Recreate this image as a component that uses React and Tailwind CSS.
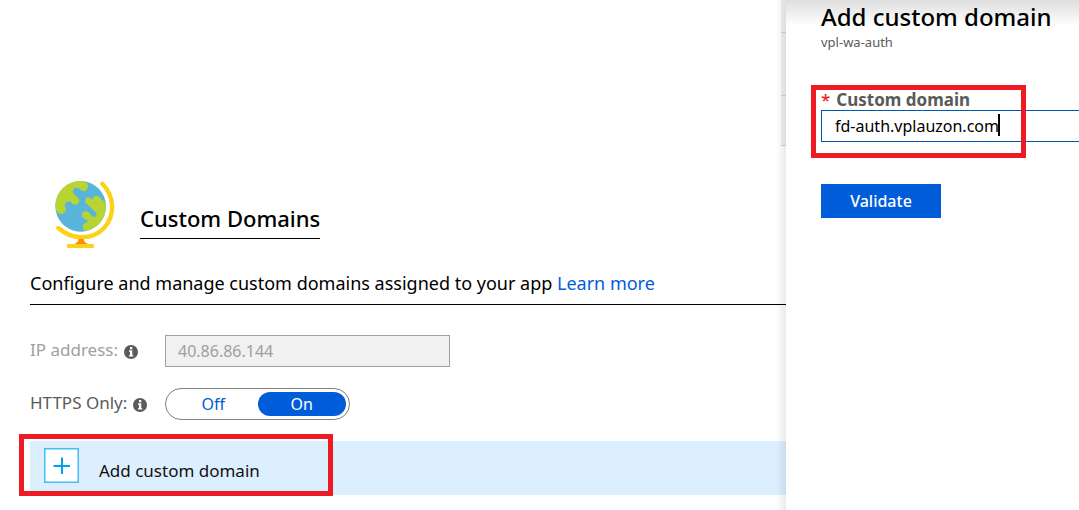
import React, { useState } from "react";

function Globe() {
  return (
    <svg width="60" height="67" viewBox="15 15 180 201" aria-hidden="true" className="shrink-0">
      <circle cx="92" cy="91" r="76" fill="#59b4d9" />
      <path
        d="M18 102C10 54 46 15 92 15L103 16C113 19 117 31 111 40C106 47 98 47 92 42C87 34 75 32 70 41C66 48 70 52 74 56L84 65C91 73 88 83 79 86C71 88 65 81 60 75C57 80 51 74 47 80L43 89C50 97 48 109 39 113C29 116 21 109 18 102Z"
        fill="#b8d432"
      />
      <path
        d="M129 67C131 60 140 57 147 62L166 80C172 110 157 142 132 155C123 160 114 163 105 164C97 159 96 150 101 144C106 140 113 141 113 136C113 132 105 129 100 125C95 121 94 112 100 108C107 103 115 106 119 112C124 120 130 125 136 122C142 118 140 112 137 109L108 81C103 76 105 68 110 65C118 61 122 70 127 71Z"
        fill="#b8d432"
      />
      <path d="M157 23C194 61 196 117 163 155C127 193 67 193 25 156" fill="none" stroke="#fcd116" strokeWidth="13" strokeLinecap="round" />
      <path d="M86 189H101C102 196 106 202 115 204H72C81 202 85 196 86 189Z" fill="#ff8c00" />
      <rect x="51" y="204" width="80" height="12" fill="#fcd116" />
    </svg>
  );
}

function InfoIcon() {
  return (
    <svg width="14" height="14" viewBox="0 0 14 14" aria-hidden="true" className="mt-1 shrink-0">
      <circle cx="7" cy="7" r="7" fill="#5a5a5a" />
      <path d="M6 2H8.3V4.3H6ZM5 5.3H8.3V10.2H9.3V11.6H5V10.2H6V6.7H5Z" fill="#fff" />
    </svg>
  );
}

function Highlight({ className }) {
  return <div aria-hidden="true" className={`pointer-events-none absolute border-5 border-[#ed1c24] ${className}`} />;
}

function CustomDomains() {
  const [httpsOnly, setHttpsOnly] = useState(true);
  const off = "h-6 flex-1 rounded-full text-base leading-6 text-[#015cda]";
  const on = "h-6 flex-1 rounded-full bg-[#015cda] text-base leading-6 text-white";
  return (
    <main className="min-w-0 flex-1 pt-[181px] pl-[30px]">
      <header className="flex items-start gap-[25px] pl-[25px]">
        <Globe />
        <h1 className="mt-[22px] border-b border-black pb-1 text-[22px] leading-[31px] font-medium">Custom Domains</h1>
      </header>
      <p className="border-b border-black pt-[20px] pb-[6px] text-lg leading-[30px] whitespace-nowrap">
        Configure and manage custom domains assigned to your app{" "}
        <a href="#learn-more" className="text-[#015cda]">Learn more</a>
      </p>
      <div className="mt-[30px] flex items-center">
        <div className="flex w-[135px] items-center gap-[6px] pb-[2px]">
          <label htmlFor="ip" className="text-[17px] leading-6 text-[#a0a0a0]">IP address:</label>
          <InfoIcon />
        </div>
        <input
          id="ip"
          disabled
          defaultValue="40.86.86.144"
          className="h-8 w-[285px] border border-[#a0a0a0] bg-[#f1f1f1] px-3 text-base text-[#a0a0a0]"
        />
      </div>
      <div className="mt-[21px] flex items-center">
        <div className="flex w-[135px] items-center gap-[6px] pb-[2px]">
          <span id="https-label" className="text-[17px] leading-6 text-[#5a5a5a]">HTTPS Only:</span>
          <InfoIcon />
        </div>
        <div role="group" aria-labelledby="https-label" className="flex h-8 w-[185px] items-center rounded-full border border-[#808080] px-[3px]">
          <button type="button" aria-pressed={!httpsOnly} onClick={() => setHttpsOnly(false)} className={httpsOnly ? off : on}>Off</button>
          <button type="button" aria-pressed={httpsOnly} onClick={() => setHttpsOnly(true)} className={httpsOnly ? on : off}>On</button>
        </div>
      </div>
      <div className="relative mt-[21px]">
        <button type="button" className="flex h-[54px] w-full items-start gap-5 bg-[#dceffe] pt-[7px] pl-[14px] text-left">
          <svg width="35" height="35" viewBox="0 0 35 35" aria-hidden="true" className="shrink-0">
            <rect x="0.75" y="0.75" width="33.5" height="33.5" fill="#fff" stroke="#45bdf3" strokeWidth="1.5" />
            <path d="M9.5 18H26M18 9.5V26" stroke="#00a2ed" strokeWidth="2" />
          </svg>
          <span className="mt-[11px] text-[17px] leading-6 text-[#111]">Add custom domain</span>
        </button>
        <Highlight className="top-[-7px] left-[-11px] h-[62px] w-[314px]" />
      </div>
    </main>
  );
}

function AddDomainPanel() {
  return (
    <aside className="relative w-[293px] shrink-0 bg-white bg-linear-to-b from-[#dedede] to-white to-[26px] pl-[35px]">
      <div aria-hidden="true" className="absolute top-0 right-full h-full w-[10px] bg-linear-to-l from-black/8 to-transparent" />
      <div aria-hidden="true" className="absolute top-0 right-full h-[146px] w-[5px] bg-black/5">
        <div className="absolute top-8 h-px w-full bg-[#c8c8c8]" />
        <div className="absolute top-[95px] h-px w-full bg-[#c8c8c8]" />
        <div className="absolute top-[145px] h-px w-full bg-[#c8c8c8]" />
      </div>
      <h2 className="pt-px text-2xl leading-8 font-medium whitespace-nowrap">Add custom domain</h2>
      <p className="text-[13px] leading-[18px] text-[#5a5a5a]">vpl-wa-auth</p>
      <div className="relative mt-[38px]">
        <label htmlFor="domain" className="block text-[17px] leading-[22px] font-bold text-[#5a5a5a]">
          <span className="mr-[6px] font-medium text-[#ed1c24]">*</span>Custom domain
        </label>
        <div className="relative -mt-px">
          <input
            id="domain"
            defaultValue="fd-auth.vplauzon.com"
            className="block h-8 w-full border border-r-0 border-[#0058ad] bg-white pl-[13px] text-base text-black outline-none"
          />
          <span aria-hidden="true" className="absolute top-1 left-[177px] h-[22px] w-[2px] bg-black" />
        </div>
        <Highlight className="top-[-4px] left-[-10px] h-[73px] w-[215px]" />
      </div>
      <button type="button" className="mt-[42px] h-[34px] w-[120px] bg-[#015cda] text-base font-medium text-white">Validate</button>
    </aside>
  );
}

export default function App() {
  return (
    <div className="flex min-h-screen overflow-hidden bg-white font-['Noto_Sans',sans-serif] text-black">
      <CustomDomains />
      <AddDomainPanel />
    </div>
  );
}
